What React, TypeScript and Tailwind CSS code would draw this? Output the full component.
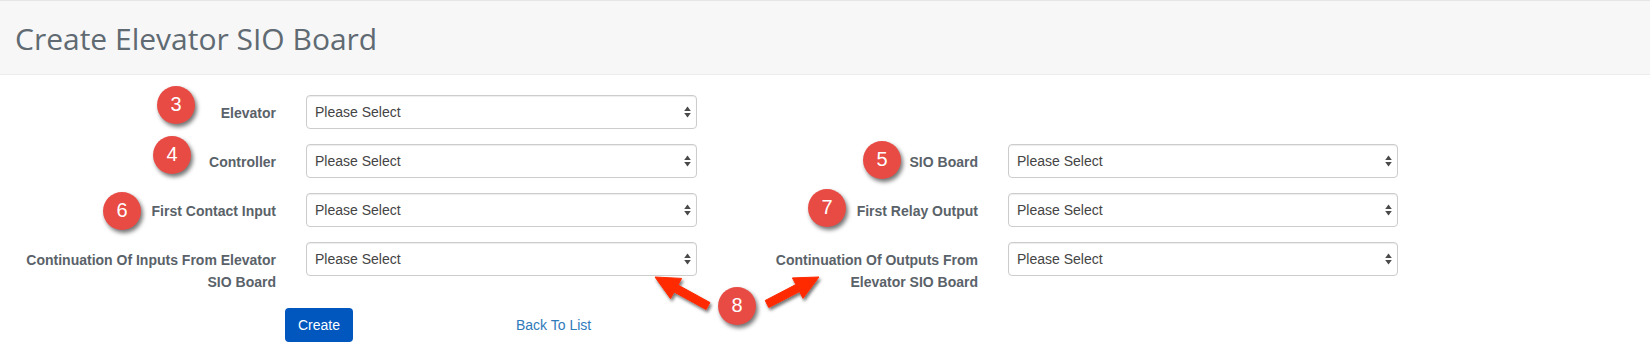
import React from 'react';

type Pt = [number, number];

// polygon for an annotation arrow going from tail to tip
function arrowPoints(tail: Pt, tip: Pt, head = 24, headHalf = 11.5, shaft = 4) {
  const dx = tip[0] - tail[0];
  const dy = tip[1] - tail[1];
  const len = Math.hypot(dx, dy);
  const ux = dx / len;
  const uy = dy / len;
  const nx = -uy;
  const ny = ux;
  const bx = tip[0] - head * ux;
  const by = tip[1] - head * uy;
  const pts: Pt[] = [
    tip,
    [bx + headHalf * nx, by + headHalf * ny],
    [bx + shaft * nx, by + shaft * ny],
    [tail[0] + shaft * nx, tail[1] + shaft * ny],
    [tail[0] - shaft * nx, tail[1] - shaft * ny],
    [bx - shaft * nx, by - shaft * ny],
    [bx - headHalf * nx, by - headHalf * ny],
  ];
  return pts.map((p) => `${p[0].toFixed(1)},${p[1].toFixed(1)}`).join(' ');
}

function SelectArrows() {
  return (
    <svg width="7" height="12" viewBox="0 0 7 12" className="pointer-events-none absolute right-[6px] top-1/2 -translate-y-1/2">
      <path d="M3.5 0.5 L6.8 5 H0.2 Z" fill="#4a4a4a" />
      <path d="M3.5 11.5 L6.8 7 H0.2 Z" fill="#4a4a4a" />
    </svg>
  );
}

function Select({ width }: { width: string }) {
  return (
    <div className={`relative h-[34px] shrink-0 ${width}`}>
      <select
        defaultValue=""
        className="h-full w-full appearance-none rounded-[4px] border border-[#cccccc] bg-white pl-[8px] text-[14px] text-[#444444] shadow-[inset_0_1px_1px_rgba(0,0,0,0.075)] outline-none"
      >
        <option value="">Please Select</option>
      </select>
      <SelectArrows />
    </div>
  );
}

function Label({ children, className = '' }: { children: React.ReactNode; className?: string }) {
  return (
    <label className={`w-[252px] shrink-0 pt-[7px] text-right text-[14px] font-bold leading-[22px] text-[#5a6269] ${className}`}>
      {children}
    </label>
  );
}

function Badge({ n, className }: { n: number; className: string }) {
  return (
    <div
      className={`absolute flex h-[38px] w-[38px] items-center justify-center rounded-full bg-[#e84b44] pb-[2px] text-[20px] text-white shadow-[2px_3px_4px_rgba(0,0,0,0.55)] ${className}`}
    >
      {n}
    </div>
  );
}

export default function App() {
  return (
    <div className="relative h-[360px] w-[1650px] overflow-hidden bg-white font-['Liberation_Sans',Arial,sans-serif]">
      <header className="flex h-[75px] items-center border-t border-b border-t-[#e6e6e6] border-b-[#ececec] bg-[#f7f7f7] pl-[15px] pt-[2px]">
        <h1 className="font-['Open_Sans',sans-serif] text-[30px] font-normal text-[#5f6a72]">Create Elevator SIO Board</h1>
      </header>

      <form className="flex flex-col gap-[15px] pt-[20px]">
        <div className="flex items-start">
          <Label className="ml-[24px]">Elevator</Label>
          <div className="ml-[30px]">
            <Select width="w-[391px]" />
          </div>
        </div>

        <div className="flex items-start">
          <Label className="ml-[24px]">Controller</Label>
          <div className="ml-[30px]">
            <Select width="w-[391px]" />
          </div>
          <Label className="ml-[29px]">SIO Board</Label>
          <div className="ml-[30px]">
            <Select width="w-[390px]" />
          </div>
        </div>

        <div className="flex items-start">
          <Label className="ml-[24px]">First Contact Input</Label>
          <div className="ml-[30px]">
            <Select width="w-[391px]" />
          </div>
          <Label className="ml-[29px]">First Relay Output</Label>
          <div className="ml-[30px]">
            <Select width="w-[390px]" />
          </div>
        </div>

        <div className="flex items-start">
          <Label className="ml-[24px]">Continuation Of Inputs From Elevator SIO Board</Label>
          <div className="ml-[30px]">
            <Select width="w-[391px]" />
          </div>
          <Label className="ml-[29px]">Continuation Of Outputs From Elevator SIO Board</Label>
          <div className="ml-[30px]">
            <Select width="w-[390px]" />
          </div>
        </div>

        <div className="flex items-center">
          <button
            type="button"
            className="ml-[285px] h-[34px] w-[68px] rounded-[4px] bg-[#0257bf] text-[14px] text-white"
          >
            Create
          </button>
          <a href="#" className="ml-[163px] text-[14px] text-[#2f7abb]">
            Back To List
          </a>
        </div>
      </form>

      {/* annotation overlay */}
      <Badge n={3} className="left-[157px] top-[86px]" />
      <Badge n={4} className="left-[153px] top-[136px]" />
      <Badge n={6} className="left-[103px] top-[192px]" />
      <Badge n={5} className="left-[863px] top-[141px]" />
      <Badge n={7} className="left-[808px] top-[189px]" />
      <Badge n={8} className="left-[718px] top-[287px]" />

      <svg className="pointer-events-none absolute left-0 top-0" width="1650" height="360">
        <defs>
          <filter id="arrowShadow" x="-20%" y="-20%" width="140%" height="140%">
            <feDropShadow dx="1.5" dy="2.5" stdDeviation="1.5" floodColor="#000" floodOpacity="0.55" />
          </filter>
        </defs>
        <g filter="url(#arrowShadow)" fill="#ff2a00" stroke="#ff2a00" strokeWidth="1" strokeLinejoin="round">
          <polygon points={arrowPoints([708, 306], [655, 277])} />
          <polygon points={arrowPoints([767, 304], [819, 277])} />
        </g>
      </svg>
    </div>
  );
}
